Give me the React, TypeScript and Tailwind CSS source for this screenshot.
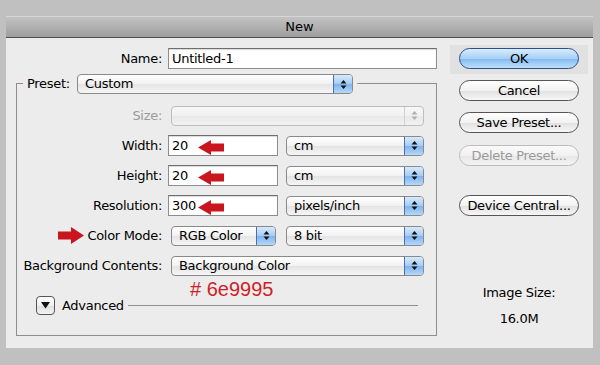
import React from 'react';

const font = "font-['DejaVu_Sans',sans-serif]";

const Arrows: React.FC<{ color: string }> = ({ color }) => (
  <svg width="7" height="11" viewBox="0 0 7 11">
    <polygon points="3.5,1 6.5,4.5 0.5,4.5" fill={color} />
    <polygon points="0.5,6.5 6.5,6.5 3.5,10" fill={color} />
  </svg>
);

const Popup: React.FC<{ label?: string; width: string; disabled?: boolean; className?: string }> = ({
  label = '',
  width,
  disabled,
  className = '',
}) => (
  <div
    className={`${width} ${className} h-[20px] flex rounded-[4px] border overflow-hidden ${
      disabled
        ? 'border-[#bdbdbd] bg-[linear-gradient(to_bottom,#f8f8f8,#f0f0f0_50%,#e9e9e9_51%,#f1f1f1)]'
        : 'border-[#8a8a8a] bg-[linear-gradient(to_bottom,#ffffff,#f1f1f1_50%,#e4e4e4_51%,#f6f6f6)]'
    }`}
  >
    <div className="flex-1 pl-[7px] text-[13px] leading-[18px] tracking-[-0.3px] text-black">{label}</div>
    <div
      className={`w-[19px] flex items-center justify-center ${
        disabled
          ? 'border-l border-[#d0d0d0]'
          : 'border-l border-[#4c6fae] bg-[linear-gradient(to_bottom,#d7eafc,#a4cbf4_50%,#7fb3ee_51%,#b4d8fa)]'
      }`}
    >
      <Arrows color={disabled ? '#b0b0b0' : '#111'} />
    </div>
  </div>
);

const Field: React.FC<{ value: string; width: string; arrow?: boolean }> = ({ value, width, arrow }) => (
  <div
    className={`${width} relative h-[21px] bg-white border border-[#8d8d8d] border-t-[#6e6e6e] shadow-[inset_0_1px_1px_rgba(0,0,0,0.15)] pl-[3px] text-[13px] leading-[19px] tracking-[-0.3px] text-black`}
  >
    {value}
    {arrow && (
      <svg className="absolute left-[29px] top-[4px]" width="26" height="15" viewBox="0 0 26 15">
        <polygon points="0,7.5 13,0 13,3.5 26,3.5 26,11.5 13,11.5 13,15" fill="#c9161e" />
      </svg>
    )}
  </div>
);

const Btn: React.FC<{ label: string; primary?: boolean; disabled?: boolean; className?: string }> = ({
  label,
  primary,
  disabled,
  className = '',
}) => (
  <div
    className={`${className} w-[120px] h-[21px] rounded-full border flex items-center justify-center text-[13px] tracking-[-0.3px] ${
      primary
        ? 'border-[#2b4f8f] bg-[linear-gradient(to_bottom,#d9ecfd,#a6cff6_50%,#80b8f0_51%,#bfe0fc)] text-black'
        : disabled
        ? 'border-[#bcbcbc] bg-[linear-gradient(to_bottom,#fafafa,#f1f1f1_50%,#e8e8e8_51%,#f3f3f3)] text-[#9a9a9a]'
        : 'border-[#555] bg-[linear-gradient(to_bottom,#ffffff,#f2f2f2_50%,#e0e0e0_51%,#f7f7f7)] text-black'
    }`}
  >
    {label}
  </div>
);

const Label: React.FC<{ children: React.ReactNode; muted?: boolean }> = ({ children, muted }) => (
  <div
    className={`w-[145px] flex items-center justify-end text-[13px] tracking-[-0.3px] ${
      muted ? 'text-[#9a9a9a]' : 'text-black'
    }`}
  >
    {children}
  </div>
);

export default function App() {
  return (
    <div className={`w-[600px] h-[365px] bg-[#c0c0c0] pt-[16px] pl-[6px] ${font}`}>
      <div className="w-[587px] h-[332px] bg-[#ececec] flex flex-col">
        {/* Title bar */}
        <div className="h-[22px] border-t border-[#d6d6d6] border-b border-b-[#4e4e4e] bg-[linear-gradient(to_bottom,#c2c2c2,#9e9e9e)] flex items-center justify-center text-[13px] text-black">
          New
        </div>

        <div className="flex">
          {/* Left side */}
          <div className="w-[431px] pl-[10px]">
            <div className="mt-[10px] flex h-[21px]">
              <div className="w-[146px] flex items-center justify-end text-[13px] tracking-[-0.3px] text-black">
                Name:
              </div>
              <Field value="Untitled-1" width="w-[269px] ml-[6px]" />
            </div>

            {/* Preset group */}
            <div className="mt-[5px] flex h-[20px]">
              <div className="w-[7px] h-[11px] self-end border-l border-t border-[#8e8e8e]" />
              <div className="w-[54px] pl-[4px] flex items-center text-[13px] tracking-[-0.3px] text-black">Preset:</div>
              <Popup label="Custom" width="w-[276px]" />
              <div className="ml-[4px] flex-1 h-[11px] self-end border-r border-t border-[#8e8e8e]" />
            </div>
            <div className="border-l border-r border-b border-[#8e8e8e] pt-[11px] pb-[20px]">
              <div className="flex flex-col gap-[9px]">
                <div className="flex h-[21px] items-center">
                  <Label muted>Size:</Label>
                  <Popup width="w-[253px]" className="ml-[9px]" disabled />
                </div>
                <div className="flex h-[21px] items-center">
                  <Label>Width:</Label>
                  <Field value="20" width="w-[110px] ml-[6px]" arrow />
                  <Popup label="cm" width="w-[138px]" className="ml-[8px]" />
                </div>
                <div className="flex h-[21px] items-center">
                  <Label>Height:</Label>
                  <Field value="20" width="w-[110px] ml-[6px]" arrow />
                  <Popup label="cm" width="w-[138px]" className="ml-[8px]" />
                </div>
                <div className="flex h-[21px] items-center">
                  <Label>Resolution:</Label>
                  <Field value="300" width="w-[110px] ml-[6px]" arrow />
                  <Popup label="pixels/inch" width="w-[138px]" className="ml-[8px]" />
                </div>
                <div className="flex h-[21px] items-center">
                  <Label>
                    <svg className="mr-[3px]" width="26" height="17" viewBox="0 0 26 17">
                      <polygon points="26,8.5 13,0 13,4.5 0,4.5 0,12.5 13,12.5 13,17" fill="#c9161e" />
                    </svg>
                    Color Mode:
                  </Label>
                  <Popup label="RGB Color" width="w-[105px]" className="ml-[9px]" />
                  <Popup label="8 bit" width="w-[138px]" className="ml-[10px]" />
                </div>
                <div className="flex h-[21px] items-center">
                  <Label>Background Contents:</Label>
                  <Popup label="Background Color" width="w-[253px]" className="ml-[9px]" />
                </div>
              </div>

              <div className="mt-[6px] pl-[173px] h-[14px] leading-[14px] text-[20px] text-[#cc1f28] font-['Liberation_Sans',sans-serif]">
                # 6e9995
              </div>

              <div className="flex items-center h-[19px] pr-[18px]">
                <div className="ml-[19px] w-[19px] h-[19px] rounded-[4px] border border-[#555] bg-[linear-gradient(to_bottom,#ffffff,#efefef_50%,#dedede_51%,#f4f4f4)] flex items-center justify-center">
                  <svg width="9" height="7" viewBox="0 0 9 7">
                    <polygon points="0,0 9,0 4.5,6.5" fill="#111" />
                  </svg>
                </div>
                <div className="ml-[7px] text-[13px] tracking-[-0.3px] text-black">Advanced</div>
                <div className="ml-[4px] flex-1 h-px bg-[#8e8e8e]" />
              </div>
            </div>
          </div>

          {/* Right side */}
          <div className="ml-[13px] w-[138px] flex flex-col items-center">
            <div className="mt-[7px] w-[138px] h-[29px] bg-[#e1e1e1] pt-[3px] flex justify-center">
              <Btn label="OK" primary />
            </div>
            <Btn label="Cancel" className="mt-[6px]" />
            <Btn label="Save Preset..." className="mt-[11px]" />
            <Btn label="Delete Preset..." className="mt-[12px]" disabled />
            <Btn label="Device Central..." className="mt-[29px]" />
            <div className="mt-[69px] text-[13px] leading-[16px] tracking-[-0.3px] text-black">Image Size:</div>
            <div className="mt-[10px] text-[13px] leading-[16px] tracking-[-0.3px] text-black">16.0M</div>
          </div>
        </div>
      </div>
    </div>
  );
}
